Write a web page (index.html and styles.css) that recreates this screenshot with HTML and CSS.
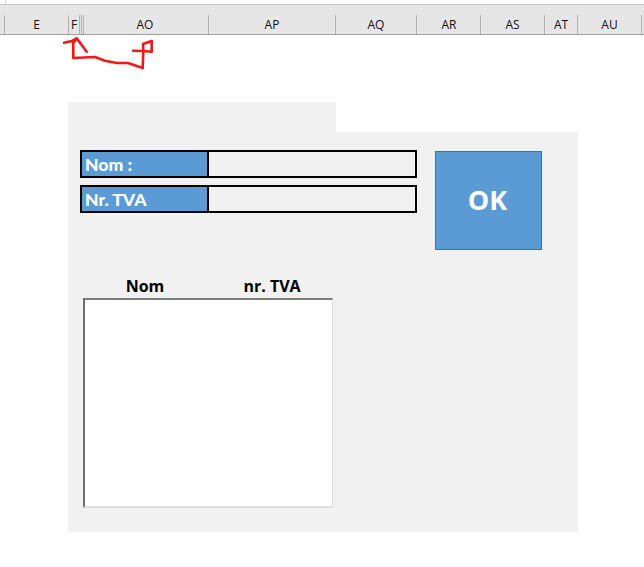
FILE: index.html
```html
<!DOCTYPE html>
<html lang="fr">
<head>
<meta charset="utf-8">
<title>Formulaire</title>
<link rel="stylesheet" href="styles.css">
</head>
<body>
<div class="sheet-top"><div class="name-box"></div></div>
<div class="columns">
  <div class="col w-lead"></div>
  <div class="col w-e">E</div>
  <div class="col w-f">F</div>
  <div class="col w-h1"></div>
  <div class="col w-h2"></div>
  <div class="col w-ao">AO</div>
  <div class="col w-ap">AP</div>
  <div class="col w-aq">AQ</div>
  <div class="col w-ar">AR</div>
  <div class="col w-as">AS</div>
  <div class="col w-at">AT</div>
  <div class="col w-au">AU</div>
</div>
<svg class="scribble" width="100" height="45" viewBox="0 0 100 45">
  <path d="M4 12.7 L12 11 L16.7 8.3 L21 14 L26.7 21.7 M16.7 8.3 L13.3 13 L13.3 28 L24 27.5 L35 27 L45 30.7 L56.7 33 L68 33 L82.7 38 L83.3 20 L83 14 L91.7 11 L91.7 21.7 L83.3 21 L73 20.7"/>
</svg>
<main class="form">
  <div class="form-tab"></div>
  <div class="form-body">
    <div class="top">
      <div class="fields">
        <div class="field"><div class="field-label">Nom :</div><div class="field-input"></div></div>
        <div class="field"><div class="field-label">Nr. TVA</div><div class="field-input"></div></div>
      </div>
      <button class="ok">OK</button>
    </div>
    <div class="list-head"><span class="head-nom">Nom</span><span class="head-tva">nr. TVA</span></div>
    <div class="list"></div>
  </div>
</main>
</body>
</html>
```
FILE: styles.css
```css
* { box-sizing: border-box; }
html, body { margin: 0; padding: 0; background: #fff; }
body { width: 644px; height: 567px; overflow: hidden; position: relative; }

.sheet-top { height: 5px; border-bottom: 1px solid #c6c6c6; padding-left: 5px; }
.name-box { height: 4px; border-left: 1px solid #d4d4d4; }

.columns { display: flex; height: 30px; background: #e6e6e6; border-bottom: 1px solid #9f9f9f; padding-top: 10px; }
.col { flex: none; border-right: 1px solid #b0b0b0; font: 12px/20px "Open Sans", sans-serif; color: #111; text-align: center; }
.w-lead { width: 5px; }
.w-e { width: 64px; }
.w-f { width: 11px; }
.w-h1 { width: 2px; }
.w-h2 { width: 2px; }
.w-ao { width: 125px; padding-right: 2px; }
.w-ap { width: 127px; }
.w-aq { width: 81px; }
.w-ar { width: 64px; padding-left: 1px; }
.w-as { width: 64px; }
.w-at { width: 33px; }
.w-au { width: 64px; }

.scribble { position: absolute; left: 60px; top: 30px; }
.scribble path { fill: none; stroke: #f01818; stroke-width: 2.6; stroke-linejoin: round; stroke-linecap: round; }

.form { width: 510px; margin: 67px 0 0 68px; }
.form-tab { width: 268px; height: 30px; background: #f1f1f1; }
.form-body { height: 400px; background: #f1f1f1; padding: 18px 0 0 12px; }

.top { display: flex; align-items: flex-start; }
.fields { width: 337px; display: flex; flex-direction: column; gap: 7px; }
.field { display: flex; height: 28px; border: 2px solid #000; }
.field-label { width: 127px; background: #5b9bd5; border-right: 2px solid #000; color: #fff; font: 900 17.6px/26px Lato, sans-serif; padding-left: 3px; }
.field-input { flex: 1; background: #f1f1f1; }

.ok { width: 107px; height: 99px; margin: 1px 0 0 18px; padding: 0 2px 2px 0; background: #5b9bd5; border: 1px solid #41719c; color: #fff; font: 700 27px "Open Sans", sans-serif; }

.list-head { display: flex; margin: 24px 0 0 3px; width: 250px; height: 24px; font: 700 16px/24px "Open Sans", sans-serif; color: #000; }
.head-nom { width: 124px; text-align: center; }
.head-tva { width: 126px; padding-left: 4px; text-align: center; }
.list { width: 250px; height: 210px; margin-left: 3px; background: #fff; border-style: solid; border-width: 2px 1px 2px 2px; border-color: #7c7c7c #e0e0e0 #e0e0e0 #6e6e6e; }
```
